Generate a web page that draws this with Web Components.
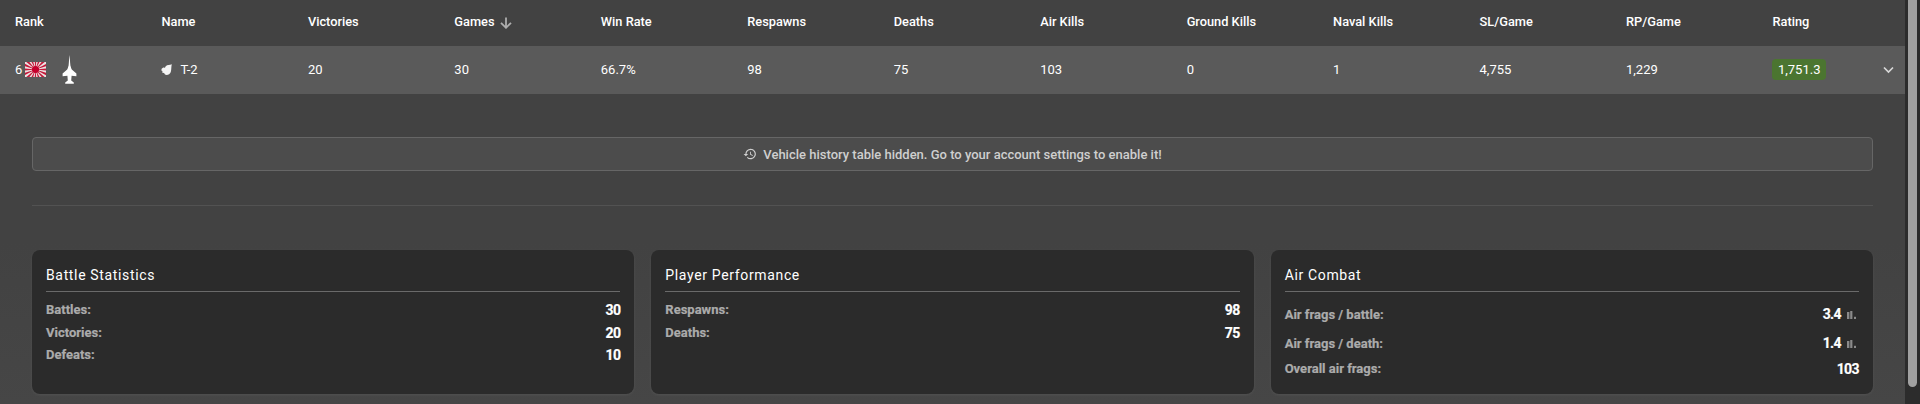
<!DOCTYPE html>
<html lang="en">
<head>
<meta charset="utf-8">
<title>Vehicle stats</title>
<style>
  html, body { margin: 0; height: 404px; overflow: hidden; background: #434343; }
  body { font-family: Roboto, "Liberation Sans", sans-serif; font-size: 13px; color: #fff; }
</style>
</head>
<body>
<stats-page>
  <stats-table></stats-table>
  <history-notice>Vehicle history table hidden. Go to your account settings to enable it!</history-notice>
  <stat-cards>
    <stat-card heading="Battle Statistics">
      <stat-line label="Battles:" value="30"></stat-line>
      <stat-line label="Victories:" value="20"></stat-line>
      <stat-line label="Defeats:" value="10"></stat-line>
    </stat-card>
    <stat-card heading="Player Performance">
      <stat-line label="Respawns:" value="98"></stat-line>
      <stat-line label="Deaths:" value="75"></stat-line>
    </stat-card>
    <stat-card heading="Air Combat">
      <stat-line label="Air frags / battle:" value="3.4" chart></stat-line>
      <stat-line label="Air frags / death:" value="1.4" chart></stat-line>
      <stat-line label="Overall air frags:" value="103"></stat-line>
    </stat-card>
  </stat-cards>
</stats-page>

<script>
const define = (name, css, html, extra = {}) => {
  customElements.define(name, class extends HTMLElement {
    constructor() {
      super()
      this.attachShadow({ mode: 'open' }).innerHTML = `<style>${css}</style>${html}`
    }
    connectedCallback() {
      if (extra.render) extra.render(this)
    }
  })
}

define('stats-page', `
  :host { display: flex; width: 1920px; height: 404px; background: linear-gradient(#424242 60%, #464646); }
  main { flex: 0 0 1905px; min-width: 0; display: flex; flex-direction: column; }
  .track { flex: 1; background: #2c2c2c; padding-left: 3px; }
  .thumb { width: 9px; height: 387px; background: #a1a1a1; border-radius: 0 0 5px 5px; }
`, `
  <main><slot></slot></main>
  <div class="track"><div class="thumb"></div></div>
`)

const COLUMNS = ['Rank', 'Name', 'Victories', 'Games', 'Win Rate', 'Respawns', 'Deaths', 'Air Kills', 'Ground Kills', 'Naval Kills', 'SL/Game', 'RP/Game', 'Rating']
const VALUES = ['20', '30', '66.7%', '98', '75', '103', '0', '1', '4,755', '1,229']

// rays of the naval flag, drawn from the disc outwards
const flagRays = Array.from({ length: 16 }, (_, i) => {
  const a = (i * 22.5 - 5.6) * Math.PI / 180
  const b = a + 11.25 * Math.PI / 180
  const p = t => `${(10.5 + Math.cos(t) * 30).toFixed(1)} ${(7.5 + Math.sin(t) * 30).toFixed(1)}`
  return `<path d="M10.5 7.5L${p(a)}L${p(b)}Z"/>`
}).join('')

define('stats-table', `
  :host { display: block; }
  .grid { display: grid; grid-template-columns: repeat(13, 146.46px); padding-left: 15px; align-items: center; }
  .head { height: 46px; font-weight: 500; font-size: 12.8px; }
  .head div { display: flex; align-items: center; gap: 5px; position: relative; top: -2px; }
  .head svg { margin-top: 3px; }
  .row { height: 48px; background: #5a5a5a; position: relative; padding-bottom: 1px; box-sizing: border-box; }
  .rank { display: flex; align-items: center; }
  .flag { margin-left: 3px; display: block; }
  .jet { margin-left: 16px; display: block; }
  .name { display: flex; align-items: center; gap: 8px; }
  .rating { display: inline-block; background: #4b7530; border-radius: 4px; padding: 0 5.5px; line-height: 21px; }
  .chevron { position: absolute; left: 1883px; top: 19px; }
`, `
  <div class="grid head"></div>
  <div class="grid row">
    <div class="rank">6
      <svg class="flag" width="21" height="15" viewBox="0 0 21 15"><rect width="21" height="15" fill="#ece3e3"/><g fill="#c4193a">${flagRays}</g><circle cx="10.5" cy="7.5" r="3.6" fill="#c4002c"/></svg>
      <svg class="jet" width="15" height="30" viewBox="0 0 15 30"><path fill="#fff" d="M7.5 0C7.9 3 8 7 8.4 10.5C9 12.5 9.3 13.5 9.8 14.6L14.4 18.6V21.2L9.6 20.8L9.2 25.6L11.8 27.4V28.8H3.2V27.4L5.8 25.6L5.4 20.8L.6 21.2V18.6L5.2 14.6C5.7 13.5 6 12.5 6.6 10.5C7 7 7.1 3 7.5 0Z"/></svg>
    </div>
    <div class="name">
      <svg width="11" height="11" viewBox="0 0 10 10"><path fill="#f4f4f4" d="M9.8.3C8 1 5.8.6 4.3 2L3.6 3.4L2 3.2L.6 4.4L.3 6L1.3 6.4L1.2 8L2.8 8.2L3.6 9.6C5.6 10.4 8 9.6 8.9 7.2C9.6 5 9.2 2.6 9.8.3Z"/></svg>
      <span>T-2</span>
    </div>
    ${VALUES.map(v => `<div>${v}</div>`).join('')}
    <div><span class="rating">1,751.3</span></div>
    <svg class="chevron" width="11" height="10" viewBox="0 0 11 10"><path d="M1 2.5L5.5 7L10 2.5" fill="none" stroke="#d8d8d8" stroke-width="1.7"/></svg>
  </div>
`, {
  render(el) {
    const head = el.shadowRoot.querySelector('.head')
    if (head.children.length) return
    head.innerHTML = COLUMNS.map(c => {
      const arrow = c === 'Games'
        ? '<svg width="12" height="12" viewBox="0 0 12 12"><path d="M6 .5V11M1 5.8L6 10.8L11 5.8" fill="none" stroke="#aeaeae" stroke-width="1.8"/></svg>'
        : ''
      return `<div>${c}${arrow}</div>`
    }).join('')
  }
})

define('history-notice', `
  :host { display: block; margin: 43px 32px 0; }
  .box { height: 32px; display: flex; align-items: center; justify-content: center; gap: 6px; background: #4c4c4c; border: 1px solid #666; border-radius: 4px; color: #cfcfcf; font-weight: 500; }
  svg { display: block; }
  hr { border: 0; height: 1px; background: #525252; margin: 34px 0 0; }
`, `
  <div class="box">
    <svg width="14" height="14" viewBox="0 0 24 24" fill="#cfcfcf"><path d="M13 3a9 9 0 0 0-9 9H1l3.9 3.9L9 12H6a7 7 0 1 1 2.05 4.95l-1.42 1.42A9 9 0 1 0 13 3Zm-1 5v5l4.25 2.52.77-1.28-3.52-2.09V8H12Z"/></svg>
    <span><slot></slot></span>
  </div>
  <hr>
`)

define('stat-cards', `
  :host { display: grid; grid-template-columns: repeat(3, 1fr); gap: 17px; margin: 44px 32px 0; height: 144px; }
`, `<slot></slot>`)

define('stat-card', `
  :host { display: block; background: #2b2b2b; border-radius: 8px; padding: 14px 14px 0; box-shadow: 0 1px 3px rgba(255,255,255,.07); }
  h3 { margin: 0; font-size: 14px; font-weight: 400; letter-spacing: .65px; line-height: 20px; padding: 1px 0 6px; border-bottom: 1px solid #6a6a6a; color: #fff; }
  .lines { display: flex; flex-direction: column; padding-top: 7px; }
`, `<h3></h3><div class="lines"><slot></slot></div>`, {
  render(el) {
    el.shadowRoot.querySelector('h3').textContent = el.getAttribute('heading')
  }
})

define('stat-line', `
  :host { display: flex; justify-content: space-between; align-items: center; line-height: 22.5px; font-weight: 700; color: #ababab; -webkit-text-stroke: .2px currentColor; }
  :host([chart]) { line-height: 29px; }
  :host([chart]:first-child) { padding-top: 1px; }
  .value { color: #fff; font-size: 14px; letter-spacing: -.6px; display: flex; align-items: center; gap: 6px; }
  svg { display: none; }
  :host([chart]) svg { display: block; }
`, `
  <span class="label"></span>
  <span class="value"><span class="num"></span><svg width="12" height="8" viewBox="0 0 12 8" fill="#8a8a8a"><rect x="0" y="1" width="2.4" height="7"/><rect x="3.2" y="0" width="2.2" height="8"/><rect x="7" y="5.8" width="2" height="2.2"/></svg></span>
`, {
  render(el) {
    el.shadowRoot.querySelector('.label').textContent = el.getAttribute('label')
    el.shadowRoot.querySelector('.num').textContent = el.getAttribute('value')
  }
})
</script>
</body>
</html>
